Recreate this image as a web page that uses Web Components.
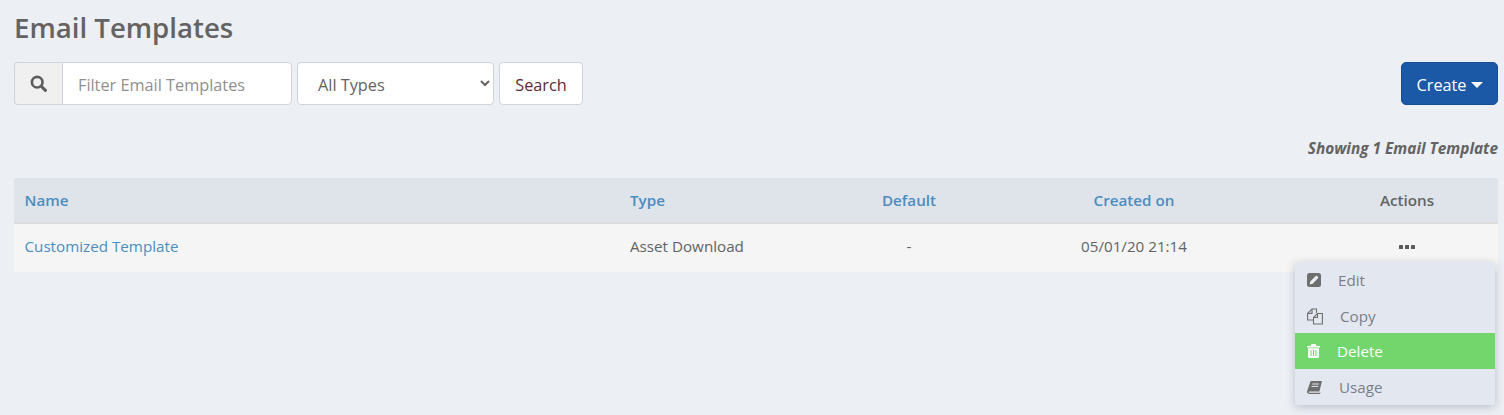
<!DOCTYPE html>
<html>
<head>
<meta charset="utf-8">
<title>Email Templates</title>
<style>
  html, body { margin: 0; background: #eceff4; }
  body { font-family: "Open Sans", "Noto Sans", sans-serif; color: #636363; }
</style>
</head>
<body>

<template id="templates-page-tpl">
  <style>
    :host { display: block; position: relative; height: 415px; padding: 0 6px 0 14px; box-sizing: border-box; overflow: hidden; }
    h1 { margin: 0; height: 62px; padding-top: 8px; box-sizing: border-box; font-size: 27.6px; line-height: 38px; font-weight: 600; color: #636363; }
    .toolbar { display: flex; justify-content: space-between; }
    .count { margin: 0; padding-top: 34px; height: 73px; box-sizing: border-box; text-align: right; font-size: 15.4px; line-height: 20px; font-weight: 700; font-style: italic; color: #636363; }
  </style>
  <h1>Email Templates</h1>
  <div class="toolbar">
    <filter-bar></filter-bar>
    <create-button>Create</create-button>
  </div>
  <p class="count">Showing 1 Email Template</p>
  <templates-table></templates-table>
  <action-menu></action-menu>
</template>

<template id="filter-bar-tpl">
  <style>
    :host { display: flex; gap: 5px; height: 43px; font-size: 16.3px; }
    .group { display: flex; width: 278px; }
    .addon { width: 48px; box-sizing: border-box; display: flex; align-items: center; justify-content: center; background: #f0f0f0; border: 1px solid #ced4da; border-right: 0; border-radius: 4px 0 0 4px; }
    input { flex: 1; min-width: 0; box-sizing: border-box; padding: 2px 15px 0; border: 1px solid #ced4da; border-radius: 0 4px 4px 0; background: #fff; font: inherit; color: #636363; outline: 0; }
    input::placeholder { color: #8f8f8f; opacity: 1; }
    select { width: 197px; box-sizing: border-box; padding: 2px 16px 0; border: 1px solid #ced4da; border-radius: 4px; background: #fff; font: inherit; color: #636363; outline: 0; }
    button { width: 84px; box-sizing: border-box; border: 1px solid #ced4da; border-radius: 4px; background: #fff; font: inherit; color: #5a2a35; padding: 2px 0 0; }
  </style>
  <div class="group">
    <span class="addon">
      <svg width="17" height="17" viewBox="0 0 17 17"><circle cx="7.2" cy="7.2" r="5.3" fill="none" stroke="#5d5d5d" stroke-width="2.6"/><path d="M11 11l4.4 4.4" stroke="#5d5d5d" stroke-width="3" stroke-linecap="round"/></svg>
    </span>
    <input type="text" placeholder="Filter Email Templates">
  </div>
  <select><option>All Types</option></select>
  <button type="button">Search</button>
</template>

<template id="create-button-tpl">
  <style>
    :host { display: block; }
    button { display: flex; align-items: center; justify-content: center; gap: 4px; width: 97px; height: 43px; padding: 2px 0 0; box-sizing: border-box; background: #1b58a5; border: 1px solid #174f96; border-radius: 5px; color: #fff; font: inherit; font-size: 16.3px; }
    i { width: 0; height: 0; border-left: 6px solid transparent; border-right: 6px solid transparent; border-top: 6px solid #fff; }
  </style>
  <button type="button"><slot></slot><i></i></button>
</template>

<template id="templates-table-tpl">
  <style>
    :host { display: block; font-size: 15.2px; }
    .row { display: grid; grid-template-columns: 605px 247px 86px 364px 182px; align-items: center; box-sizing: border-box; }
    .row > * { padding: 0 11px; }
    .head { height: 46px; background: #dfe3ea; border-bottom: 2px solid #dcdcdc; font-weight: 600; color: #636363; }
    .body { height: 48px; padding-bottom: 5px; background: #f5f5f5; color: #636363; }
    .row > .first { padding-left: 10.5px; }
    .link { color: #4b8dbf; }
    .row > .c { padding: 0; text-align: center; }
    .row > .dots { display: flex; justify-content: center; gap: 1.5px; padding-top: 3px; }
    .dots b { width: 4.5px; height: 4px; background: #5a5a5a; border-radius: .5px; }
  </style>
  <div class="row head">
    <span class="link first">Name</span>
    <span class="link">Type</span>
    <span class="link c">Default</span>
    <span class="link c">Created on</span>
    <span class="c">Actions</span>
  </div>
  <div class="row body">
    <span class="link first">Customized Template</span>
    <span>Asset Download</span>
    <span class="c">-</span>
    <span class="c">05/01/20 21:14</span>
    <span class="dots"><b></b><b></b><b></b></span>
  </div>
</template>

<template id="action-menu-tpl">
  <style>
    :host { display: block; position: absolute; left: 1295px; top: 262px; width: 200px; padding-bottom: .5px; background: #e3e8f0; border-radius: 2px; box-shadow: 0 2px 8px rgba(60, 70, 90, .28); font-size: 15.2px; color: #7b8088; }
    a { display: flex; align-items: center; gap: 17px; height: 35.5px; padding-left: 12px; box-sizing: border-box; }
    a.low { padding-top: 1.5px; }
    a.on { background: #72d66d; color: #fff; }
    svg { display: block; flex: none; }
  </style>
  <a>
    <svg width="14" height="14" viewBox="0 0 14 14"><rect width="14" height="14" rx="2.5" fill="#6e6e6e"/><path d="M2.6 11.4l.7-3 5.4-5.400c.4-.4 1-.4 1.400 0l.9.9c.4.4.4 1 0 1.400l-5.400 5.400z" fill="#eceff4"/></svg>
    <span>Edit</span>
  </a>
  <a class="low">
    <svg width="16" height="17" viewBox="0 0 16 17" fill="none" stroke="#6e6e6e" stroke-width="1.1"><path d="M9.5 5V1H5L.6 5.4V12H6"/><path d="M5 1v4.4H.6"/><path d="M15.4 5.500V16H6.500V9.500L10.500 5.500z"/><path d="M10.500 5.500v4H6.500"/></svg>
    <span>Copy</span>
  </a>
  <a class="on">
    <svg width="13" height="14" viewBox="0 0 13 14"><path fill="#fff" d="M4.500 0h4l1 2H13v1.400H0V2h3.500zM1 4.200h11V12.500c0 .9-.6 1.500-1.400 1.500H2.400C1.600 14 1 13.400 1 12.500z"/><path d="M4 6v6M6.500 6v6M9 6v6" stroke="#72d66d" stroke-width="1"/></svg>
    <span>Delete</span>
  </a>
  <a class="low">
    <svg width="15" height="13" viewBox="0 0 15 13"><path fill="#6e6e6e" d="M3.600 0H15l-2.600 10.400H2.600c-.8 0-1 .5-.9.8.1.3.5.6 1 .6h10.200l.9-.9L12.800 13H2.400C1 13-.2 11.800 .1 10.300z"/><path d="M5.300 3h6.500M4.600 5.400h6.500" stroke="#e3e8f0" stroke-width="1"/></svg>
    <span>Usage</span>
  </a>
</template>

<templates-page></templates-page>

<script>
  (function defineElements(customElements, document) {
    'use strict';

    class TemplatedElement extends HTMLElement {
      constructor() {
        super();
        const shadowRoot = this.attachShadow({mode: 'open'});
        const templ = document.querySelector('#' + this.localName + '-tpl');
        shadowRoot.appendChild(document.importNode(templ.content, true));
      }
    }

    customElements.define('templates-page', class extends TemplatedElement {});
    customElements.define('filter-bar', class extends TemplatedElement {});
    customElements.define('create-button', class extends TemplatedElement {});
    customElements.define('templates-table', class extends TemplatedElement {});
    customElements.define('action-menu', class extends TemplatedElement {});
  })(window.customElements, document);
</script>
</body>
</html>
